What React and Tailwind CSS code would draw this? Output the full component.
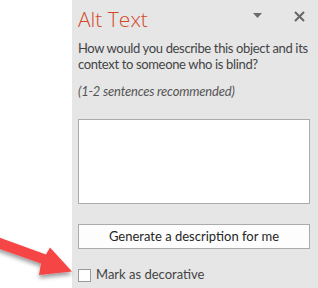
export default function App() {
  return (
    <div
      className="relative flex h-[288px] w-[318px] overflow-hidden bg-white"
      style={{ fontFamily: 'Lato, "Noto Sans", sans-serif' }}
    >
      <div className="w-[72px] shrink-0 bg-white" />
      <div className="flex flex-1 flex-col bg-[#e6e6e6] pl-[6px] pr-[8px]">
        <div className="flex h-[40px] items-start">
          <h1
            className="mt-[6px] flex-1 text-[21px] font-light leading-[26px] text-[#d24726]"
            style={{ fontFamily: '"Open Sans", sans-serif' }}
          >
            Alt Text
          </h1>
          <svg width="10" height="6" viewBox="0 0 10 6" className="mt-[13px] mr-[31px]">
            <path d="M0 0 H9 L4.5 5 Z" fill="#6b6b6b" />
          </svg>
          <svg width="11" height="11" viewBox="0 0 11 11" className="mt-[11px] mr-[5px]">
            <path d="M1 1 L10 10 M10 1 L1 10" stroke="#666" strokeWidth="2" />
          </svg>
        </div>
        <p className="whitespace-nowrap text-[13px] leading-[16px] tracking-[-0.35px] text-[#444]">
          How would you describe this object and its
          <br />
          context to someone who is blind?
        </p>
        <p className="mt-[11px] text-[13px] italic leading-[16px] tracking-[-0.2px] text-[#555]">(1-2 sentences recommended)</p>
        <div className="mt-[20px] h-[85px] w-[232px] border border-[#ababab] bg-white" />
        <button className="mt-[20px] h-[25px] w-[232px] border border-[#ababab] bg-[#fdfdfd] text-[13px] text-[#262626]">
          Generate a description for me
        </button>
        <label className="mt-[18px] flex h-[16px] items-center gap-[5px] text-[13px] text-[#444]">
          <span className="h-[13px] w-[13px] border border-[#999] bg-white" />
          Mark as decorative
        </label>
      </div>
      <svg className="pointer-events-none absolute left-0 top-0" width="318" height="288">
        <defs>
          <filter id="sh" x="-20%" y="-20%" width="140%" height="160%">
            <feDropShadow dx="0" dy="3" stdDeviation="2" floodColor="#000" floodOpacity="0.4" />
          </filter>
        </defs>
        <polygon
          points="-5,236 46,254.5 50,247.5 72,271.5 39,275 41,263.5 -5,247.3"
          fill="#f54545"
          filter="url(#sh)"
        />
      </svg>
    </div>
  );
}
